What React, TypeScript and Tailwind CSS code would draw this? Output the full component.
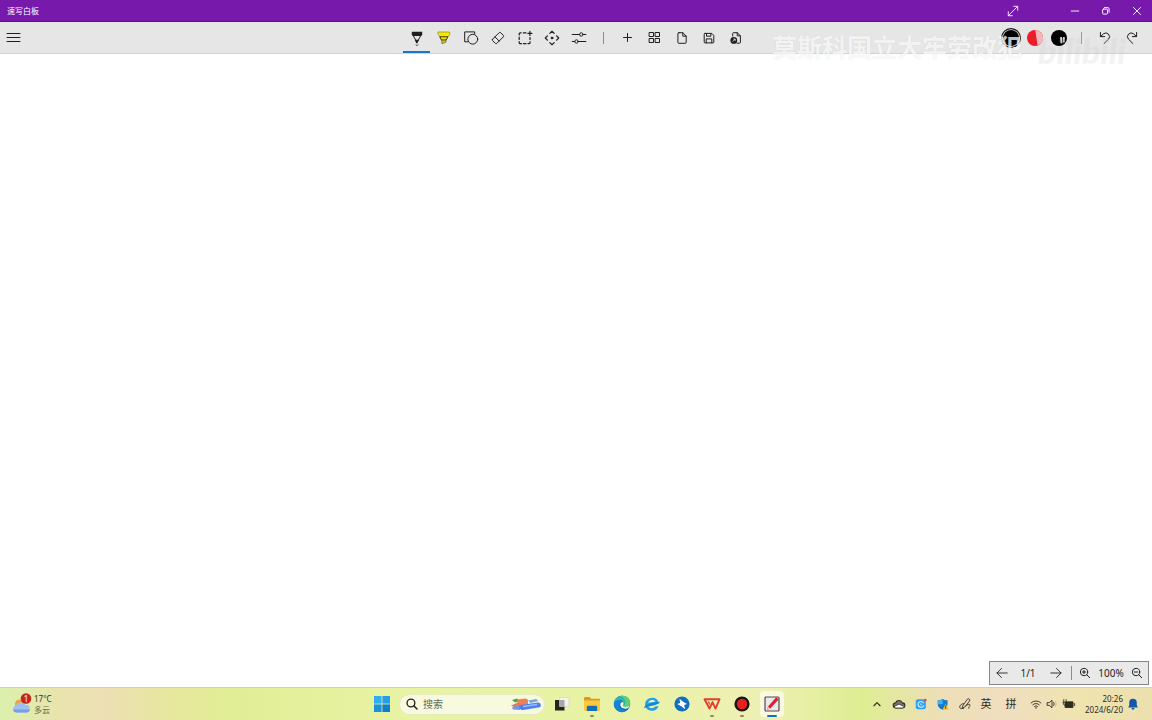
import React from "react";

interface IconProps {
  children: React.ReactNode;
  className?: string;
}

// 16px line icon, drawn in the current text colour
const Icon: React.FC<IconProps> = ({ children, className = "size-4" }) => (
  <svg
    viewBox="0 0 16 16"
    className={className}
    fill="none"
    stroke="currentColor"
    strokeWidth={1}
    strokeLinecap="round"
    strokeLinejoin="round"
    aria-hidden="true"
  >
    {children}
  </svg>
);

interface Tool {
  label: string;
  icon: React.ReactNode;
  active?: boolean;
}

const drawTools: Tool[] = [
  {
    label: "笔",
    active: true,
    icon: (
      <Icon>
        <path d="M2.8 1.8h10.4v2.4L12.3 6H3.7l-.9-1.800z" fill="currentColor" stroke="none" />
        <path d="M4.2 5.500 8 12.600l3.800-7.100" />
        <path d="M6.700 10.200h2.600L8 12.800z" fill="currentColor" />
        <path d="M7 14.800l1 .8 1-.8" strokeWidth=".8" />
      </Icon>
    ),
  },
  {
    label: "荧光笔",
    icon: (
      <Icon>
        <path d="M2.300 2h11.400v2.500L12 7H4L2.300 4.500z" fill="#f6e800" stroke="#8f8a1c" strokeWidth=".7" />
        <path d="M4.200 6.800h7.600L10.200 10H5.800z" fill="#f6e800" stroke="#3c3a12" />
        <path d="M6 10.200h4V12l-3.600 1.600z" fill="#d8cb00" stroke="#6b671a" strokeWidth=".8" />
      </Icon>
    ),
  },
  {
    label: "形状",
    icon: (
      <Icon>
        <path d="M4.600 11.800H1.700V1.900h10v2" />
        <circle cx="9.8" cy="9.2" r="4.9" />
      </Icon>
    ),
  },
  {
    label: "橡皮擦",
    icon: (
      <Icon>
        <path d="M2.6 9.200 9.200 2.600a1 1 0 0 1 1.400 0l2.800 2.800a1 1 0 0 1 0 1.400l-6.600 6.600a1 1 0 0 1-1.400 0l-2.800-2.800a1 1 0 0 1 0-1.400z" />
        <path d="M5 6.900 9.100 11" />
      </Icon>
    ),
  },
  {
    label: "选择",
    icon: (
      <Icon>
        <path
          d="M2.200 5V3.800a1 1 0 0 1 1-1h1M2.200 7v2.400M2.200 11.500v1.200a1 1 0 0 0 1 1h1.200M6.400 13.700H9M11 13.700h1a1 1 0 0 0 1-1v-1.200M13 9.400V7.600M6.400 2.800H9M12.900 1.400v4M10.900 3.400h4"
          strokeWidth="1.2"
        />
      </Icon>
    ),
  },
  {
    label: "移动",
    icon: (
      <Icon>
        <path
          d="M5.800 3.400 8 1.300l2.200 2.100M5.800 12.600 8 14.700l2.200-2.100M3.400 5.800 1.300 8l2.100 2.200M12.600 5.800 14.700 8l-2.100 2.200"
          strokeWidth="1.2"
        />
        <circle cx="8" cy="8" r=".9" fill="currentColor" />
      </Icon>
    ),
  },
  {
    label: "设置",
    icon: (
      <Icon>
        <path d="M1.300 4.500h7.200M12.200 4.500h2.600M1.300 11.500h2.300M7.300 11.500h7.500" strokeWidth="1.2" />
        <circle cx="10.300" cy="4.500" r="1.700" />
        <circle cx="5.500" cy="11.500" r="1.700" />
      </Icon>
    ),
  },
];

const pageTools: Tool[] = [
  {
    label: "新建",
    icon: (
      <Icon>
        <path d="M7.500 3.500v8M3.500 7.500h8" />
      </Icon>
    ),
  },
  {
    label: "所有页面",
    icon: (
      <Icon>
        <path d="M2.500 2.500h4v4h-4zM8.500 2.500h4v4h-4zM2.500 8.500h4v4h-4zM8.500 8.500h4v4h-4z" />
      </Icon>
    ),
  },
  {
    label: "打开",
    icon: (
      <Icon>
        <path d="M4.900 2.700h4l3.300 3.400v6.200a1 1 0 0 1-1 1H4.900a1 1 0 0 1-1-1V3.700a1 1 0 0 1 1-1zM8.800 2.800v3.400h3.400" />
      </Icon>
    ),
  },
  {
    label: "保存",
    icon: (
      <Icon>
        <path d="M4 3.400h6.800l2 2V12a.9.9 0 0 1-.9.9H4.100a.9.9 0 0 1-.9-.9V4.300a.9.9 0 0 1 .8-.9z" />
        <path d="M5.500 3.600v2.600h4.400V3.600M5.200 12.800V8.900h5.600v3.900" />
      </Icon>
    ),
  },
  {
    label: "导出",
    icon: (
      <Icon>
        <path d="M4.700 6V3.500a.8.8 0 0 1 .8-.8h3.900l3 3.200v6.300a1 1 0 0 1-1 1H9M9.200 2.800v3h3" />
        <circle cx="5.800" cy="10.400" r="3.400" fill="currentColor" stroke="none" />
        <path d="M4.700 11.500 7 9.200M5.600 9h1.600v1.600" stroke="#e6e6e6" strokeWidth=".8" />
      </Icon>
    ),
  },
];

const ToolButton: React.FC<Tool> = ({ label, icon, active }) => (
  <button
    type="button"
    aria-label={label}
    className={
      active
        ? "flex h-full w-[27px] items-center justify-center border-y-2 border-t-transparent border-b-[#1577d2]"
        : "flex h-full w-[27px] items-center justify-center"
    }
  >
    {icon}
  </button>
);

const TitleBar: React.FC = () => (
  <header className="flex h-[22px] items-stretch border-b border-[#5c1191] bg-[#7719aa] text-white">
    <h1 className="flex flex-1 items-center pl-[7px] text-[8px]">速写白板</h1>
    <button type="button" aria-label="全屏" className="mr-[31px] flex w-[31px] items-center justify-center">
      <Icon className="size-3.5">
        <path d="M2.800 13.200 13.200 2.800M8.800 2.600h4.600v4.600M2.600 8.800v4.600h4.600" />
      </Icon>
    </button>
    <button type="button" aria-label="最小化" className="flex w-[31px] items-center justify-center">
      <Icon className="size-3">
        <path d="M3 8h10" strokeWidth="1.2" />
      </Icon>
    </button>
    <button type="button" aria-label="还原" className="flex w-[31px] items-center justify-center">
      <Icon className="size-3">
        <rect x="3.500" y="5.500" width="6.600" height="6.600" rx="1" strokeWidth="1.3" />
        <path d="M5.800 3.500h4.700a1.600 1.600 0 0 1 1.600 1.600v4.700" strokeWidth="1.3" />
      </Icon>
    </button>
    <button type="button" aria-label="关闭" className="flex w-[31px] items-center justify-center">
      <Icon className="size-3">
        <path d="M3.300 3.300l9.400 9.400M12.700 3.300l-9.400 9.400" strokeWidth="1.3" />
      </Icon>
    </button>
  </header>
);

const Toolbar: React.FC = () => (
  <div className="relative grid h-8 grid-cols-[1fr_auto_1fr] items-stretch border-b border-[#d2d2d2] bg-[#e6e6e6] text-[#1f1f1f]">
    <div className="flex pl-1.5">
      <button type="button" aria-label="菜单" className="flex items-center">
        <Icon>
          <path d="M1 3.500h13M1 7.500h13M1 11.500h13" />
        </Icon>
      </button>
    </div>
    <div className="flex items-stretch">
      {drawTools.map((tool) => (
        <ToolButton key={tool.label} {...tool} />
      ))}
      <div className="flex w-[22px] items-center justify-center">
        <span className="h-3 w-px bg-[#8c8c8c]" />
      </div>
      {pageTools.map((tool) => (
        <ToolButton key={tool.label} {...tool} />
      ))}
    </div>
    <div className="flex items-center justify-end pr-[7px]">
      <button type="button" aria-label="黑色画笔" className="flex w-6 justify-center">
        <svg viewBox="0 0 20 20" className="size-5 shrink-0" aria-hidden="true">
          <circle cx="10" cy="10" r="9.4" fill="#fff" stroke="#111" strokeWidth="1.2" />
          <circle cx="10" cy="10" r="8.1" fill="#000" />
        </svg>
      </button>
      <button type="button" aria-label="红色画笔" className="flex w-6 justify-center">
        <svg viewBox="0 0 16 16" className="size-4" aria-hidden="true">
          <circle cx="8" cy="8" r="8" fill="#ec1c28" />
          <path d="M8.300 0A8 8 0 0 1 10.500 15.600z" fill="#f4b7bb" />
        </svg>
      </button>
      <button type="button" aria-label="黑色细笔" className="flex w-6 justify-center">
        <svg viewBox="0 0 16 16" className="size-4" aria-hidden="true">
          <circle cx="8" cy="8" r="8" fill="#000" />
          <path d="M9 7.200l2-.3.3 6-1.600.3zM12 7h1.800l-.3 5.400h-1.300z" fill="#d8d8d8" />
        </svg>
      </button>
      <div className="flex w-5 justify-center">
        <span className="h-3 w-px bg-[#9a9a9a]" />
      </div>
      <button type="button" aria-label="撤消" className="flex w-[27px] justify-center">
        <Icon>
          <path d="M3.400 2.500v4.100h4.200M3.600 6.400l2.900-2.600a3.700 3.700 0 0 1 5.200 5.200l-4.600 4.500" />
        </Icon>
      </button>
      <button type="button" aria-label="恢复" className="flex w-[27px] justify-center">
        <Icon>
          <path d="M12.600 2.500v4.100H8.400M12.400 6.400 9.500 3.800a3.700 3.700 0 0 0-5.200 5.200l4.600 4.500" />
        </Icon>
      </button>
    </div>

    {/* stream overlay */}
    <div className="pointer-events-none absolute top-[9px] right-6 flex items-start gap-4 whitespace-nowrap">
      <span className="text-[25px] leading-8 font-bold text-white/75 [text-shadow:0_0_1px_rgba(0,0,0,0.1)]">
        莫斯科国立大牢劳改犯
      </span>
      <span className="w-[90px] font-['Lato'] text-[34px] leading-10 font-black text-white/20 italic [text-shadow:0_0_1px_rgba(0,0,0,0.06)]">
        bilibili
      </span>
    </div>
  </div>
);

const PageControls: React.FC = () => (
  <div className="flex h-6 items-center border border-[#858585] bg-[#e9e9e9] text-[10px] text-[#1c1c1c]">
    <button type="button" aria-label="上一页" className="flex w-[23px] justify-center">
      <Icon className="size-3.5">
        <path d="M14 8H2.200M7.400 2.800 2.200 8l5.200 5.200" />
      </Icon>
    </button>
    <span className="w-[30px] text-center">1/1</span>
    <button type="button" aria-label="下一页" className="flex w-[26px] justify-center">
      <Icon className="size-3.5">
        <path d="M2 8h11.800M8.600 2.800 13.800 8l-5.200 5.200" />
      </Icon>
    </button>
    <div className="flex w-1 justify-center">
      <span className="h-3.5 w-px bg-[#8c8c8c]" />
    </div>
    <button type="button" aria-label="放大" className="flex w-6 justify-center">
      <Icon className="size-3">
        <circle cx="6.7" cy="6.7" r="4.9" strokeWidth="1.3" />
        <path d="M10.300 10.300l4 4M4.600 6.700h4.200M6.700 4.600v4.200" strokeWidth="1.3" />
      </Icon>
    </button>
    <span className="flex w-7 justify-center">100%</span>
    <button type="button" aria-label="缩小" className="flex w-[23px] justify-center">
      <Icon className="size-3">
        <circle cx="6.7" cy="6.7" r="4.9" strokeWidth="1.3" />
        <path d="M10.300 10.300l4 4M4.600 6.700h4.200" strokeWidth="1.3" />
      </Icon>
    </button>
  </div>
);

interface TaskApp {
  label: string;
  art: React.ReactNode;
  state?: "running" | "focused";
}

const taskApps: TaskApp[] = [
  {
    label: "任务视图",
    art: (
      <>
        <path d="M2 5h9.500v10.500H2z" fill="#26241f" />
        <path d="M6.500 2.500H16v9H6.500z" fill="#f4f4ee" stroke="#c9c9b8" strokeWidth=".5" />
        <path d="M6.500 5h5v6.500h-5z" fill="#a8a8a8" />
      </>
    ),
  },
  {
    label: "文件资源管理器",
    state: "running",
    art: (
      <>
        <path d="M1 3a1 1 0 0 1 1-1h4.500l1.800 1.800H16a1 1 0 0 1 1 1V9H1z" fill="#d99a1d" />
        <path d="M1 5.400h16V15a1 1 0 0 1-1 1H2a1 1 0 0 1-1-1z" fill="#fdc843" />
        <path d="M3.800 16v-4a1.300 1.300 0 0 1 1.300-1.300h7.800a1.300 1.300 0 0 1 1.300 1.300v4z" fill="#156fb7" />
      </>
    ),
  },
  {
    label: "Edge",
    art: (
      <>
        <circle cx="9" cy="9" r="8.2" fill="#1268b8" />
        <path d="M.8 8.500C1.300 4 4.800.8 9.200.8c4.700 0 8 3.300 8 6.900 0 2.600-2 4.300-4.500 4.300-1.800 0-2.800-.8-2.800-1.400 0-.5.700-.9.700-2.100 0-2-1.800-3.400-4-3.400-2.600 0-4.600 1.300-5.800 3.400z" fill="#2fb5b0" />
        <path d="M9.200.8c4.700 0 8 3.300 8 6.900 0 2.600-2 4.300-4.500 4.300-1.500 0-2.500-.6-2.700-1.100 4-.5 3.500-8.300-3-9.800.7-.2 1.400-.3 2.200-.3z" fill="#5fd06c" />
        <path d="M10.600 8.500c0 1.200-.7 1.600-.7 2.100 0 .6 1 1.400 2.800 1.400 1.600 0 2.900-.6 3.700-1.700.5 1.700-1.600 3.500-4.200 3.500-3 0-5-2-4.900-4.200.1-1.700 1.300-2.500 2.300-2.500.7 0 1 .7 1 1.400z" fill="#edf6d6" />
        <path d="M.8 8.800C1.600 6.600 3.500 5.200 6 5.100c1.800 0 3.500.9 4.200 2.100-2.600-.6-4 1.400-3.600 3.600.5 3 3.400 5 7.700 4.300A8.200 8.200 0 0 1 .8 8.800z" fill="#1683d4" />
      </>
    ),
  },
  {
    label: "浏览器",
    art: (
      <>
        <path d="M2 9.300a7 7 0 0 1 13.700-1.400L4.600 9.800c1 3.800 5.300 4.500 8 1.500h2.900a7 7 0 0 1-13.500-2z" fill="#1da0e6" />
        <path d="M5 7.700a4.200 4.200 0 0 1 7.500-.9z" fill="#eaf5cf" />
        <path d="M.8 13.200c.7-3.300 6-5.400 15.900-6.500-.2 2.600-5.400 3.600-9.100 4.400-3 .7-4.800 1.400-6.800 2.100z" fill="#1484d8" />
      </>
    ),
  },
  {
    label: "迅雷",
    art: (
      <>
        <circle cx="9" cy="9" r="7.6" fill="#116fc2" />
        <path d="M6.500 3.800l3.600 3 4 2.200-3 1 1.100 4.200-3.900-3L4.200 9l2.900-1z" fill="#fff" />
      </>
    ),
  },
  {
    label: "WPS Office",
    state: "running",
    art: (
      <>
        <path d="M1.500 4.300h15l-4 9.300-3-6.500-3 6.500z" fill="none" stroke="#e43d2c" strokeWidth="1.9" strokeLinejoin="round" />
        <path d="M5.500 6.500l1.200 3" fill="none" stroke="#e43d2c" strokeWidth="1.3" />
      </>
    ),
  },
  {
    label: "录屏",
    state: "running",
    art: (
      <>
        <circle cx="9" cy="9" r="7.6" fill="#191414" />
        <circle cx="9" cy="9" r="5.2" fill="#e8201c" />
      </>
    ),
  },
  {
    label: "速写白板",
    state: "focused",
    art: (
      <>
        <rect x="2" y="2" width="14" height="14" rx="1" fill="#e8e8ee" stroke="#4a4a50" strokeWidth="1.2" />
        <path d="M5 11.500 13.300 2.300l2.300 2.100-8.300 9.200-3.300 1.200z" fill="#e01e2b" />
        <path d="M5 11.500l2.300 2.100L4 14.800z" fill="#f2c9a0" />
      </>
    ),
  },
];

const TaskButton: React.FC<TaskApp> = ({ label, art, state }) => (
  <button type="button" aria-label={label} className="flex h-full w-[30px] items-center justify-center">
    <span
      className={
        state === "focused"
          ? "flex h-[26px] w-6 flex-col items-center justify-end rounded-sm bg-[#fbf9df]"
          : "flex h-[26px] w-6 flex-col items-center justify-end"
      }
    >
      <svg viewBox="0 0 18 18" className="size-[18px]" aria-hidden="true">
        {art}
      </svg>
      <span className="flex h-1 items-end">
        {state === "focused" && <span className="h-0.5 w-2.5 rounded-full bg-[#1270c4]" />}
        {state === "running" && <span className="h-0.5 w-1 rounded-full bg-[#8a8c5c]" />}
      </span>
    </span>
  </button>
);

const Weather: React.FC = () => (
  <button type="button" className="flex items-center gap-0.5 pl-3 text-left text-[8px] leading-[11px] text-[#34361f]">
    <svg viewBox="0 0 20 22" className="h-[22px] w-5" aria-hidden="true">
      <circle cx="7.500" cy="11" r="4.500" fill="#f2a12b" />
      <path d="M4.500 19.500a3.600 3.600 0 0 1-.4-7.100 5.200 5.200 0 0 1 9.500-.3 3.700 3.700 0 0 1 .9 7.400z" fill="#9cc0f2" />
      <path d="M1 16.500a3.600 3.600 0 0 0 3.500 3h10a3.600 3.600 0 0 0 3.400-3z" fill="#769fe4" />
      <circle cx="14" cy="5.500" r="5.300" fill="#c4261d" />
      <text x="14" y="8.500" textAnchor="middle" fontSize="8" fill="#fff">
        1
      </text>
    </svg>
    <span className="flex flex-col">
      <span>17°C</span>
      <span className="text-[#6f7150]">多云</span>
    </span>
  </button>
);

const SearchBox: React.FC = () => (
  <label className="mx-0.5 flex h-[21px] w-[146px] items-center rounded-full border border-[#e6ebbf] bg-[#f7fadf] pr-0.5 pl-1.5">
    <Icon className="size-3 shrink-0 text-[#222]">
      <circle cx="6.600" cy="6.600" r="5.200" strokeWidth="1.8" />
      <path d="M10.500 10.500l4.200 4.200" strokeWidth="1.9" />
    </Icon>
    <input
      type="text"
      aria-label="搜索"
      placeholder="搜索"
      className="ml-[5px] min-w-0 flex-1 bg-transparent text-[10px] outline-none placeholder:text-[#666a55]"
    />
    <svg viewBox="0 0 32 16" className="h-4 w-8 shrink-0" aria-hidden="true">
      <path d="M2 4l5-1.500 3 2.500-5 1.500z" fill="#56a53d" />
      <path d="M7.500 3.500 15 2.500a2.500 2.500 0 0 1 3 2.500v4H7.500z" fill="#ee8150" />
      <path d="M1 9.500l7-3 4 4-6 1.500z" fill="#e9765a" />
      <path d="M2 12c2-2.500 5-3 8-2v4l-7-.5z" fill="#7d93e8" />
      <path d="M18 4.500l8-1.500 2.500 2-8 2z" fill="#72a8e3" />
      <path d="M10 9l18-2.500a2.700 2.700 0 0 1 2 4.700L13 14c-3 .5-5-3.500-3-5z" fill="#4c80ee" />
      <path d="M13 10.500l14-2" stroke="#9bbcff" strokeWidth="1.3" />
    </svg>
  </label>
);

const trayIcons: TaskApp[] = [
  {
    label: "显示隐藏的图标",
    art: <path d="M4.500 10 8 6.500l3.500 3.500" strokeWidth="1.3" />,
  },
  {
    label: "OneDrive",
    art: (
      <>
        <path d="M4.600 12.500a3 3 0 0 1-.4-6 4.200 4.200 0 0 1 7.700.2 2.900 2.900 0 0 1-.2 5.800z" fill="#77756c" strokeWidth="1.2" />
        <path d="M2.500 10.800 8 8.200l5.600 2.400c0 1-.9 1.900-1.900 1.900H4.600c-1 0-1.900-.7-2.100-1.700z" fill="#fff" strokeWidth=".8" />
      </>
    ),
  },
  {
    label: "电脑管家",
    art: (
      <>
        <rect x="2" y="2.500" width="11.500" height="11.500" rx="2.4" fill="#2d9ff1" stroke="none" />
        <path d="M10.600 6.500a3.300 3.300 0 1 0 .3 3.400" stroke="#d5efff" strokeWidth="1.3" />
        <circle cx="8" cy="8.500" r="1.300" fill="#80cdfb" stroke="none" />
        <circle cx="13" cy="3.500" r="1.400" fill="#e9443a" stroke="none" />
      </>
    ),
  },
  {
    label: "Windows 安全中心",
    art: (
      <>
        <path d="M2 3.800c2.300 0 4.100-.7 5.600-1.800 1.500 1.100 3.200 1.800 5.600 1.800v4.400c0 3.200-2.700 5.300-5.600 6.300C4.700 13.500 2 11.400 2 8.200z" fill="#1579cd" stroke="none" />
        <path d="M7.600 2v6.200H2V3.800c2.300 0 4.100-.7 5.600-1.800z" fill="#40b2ef" stroke="none" />
        <path d="M11 8l3.500 6.200h-7z" fill="#f5ba23" stroke="none" />
        <path d="M11 10.200V12M11 13.200v.1" stroke="#3c3212" strokeWidth=".9" />
      </>
    ),
  },
  {
    label: "笔菜单",
    art: (
      <>
        <path d="M5.500 10 10.500 2.700a1.600 1.600 0 0 1 2.700 1.800L8 11.300l-3 1.500z" />
        <path d="M6 7.500C3.500 8 1.500 10 2 12c.5 1.800 3 1.500 4.500.8M9 10c1.500-1.500 4.200-2.300 4.700-1.200.5 1.500-2.200 2.700-1.500 4.200" />
      </>
    ),
  },
];

const Tray: React.FC = () => (
  <div className="flex items-center justify-end pr-3 text-[#2e2b20]">
    {trayIcons.map(({ label, art }) => (
      <button key={label} type="button" aria-label={label} className="flex w-[22px] justify-center">
        <Icon className="size-3.5">{art}</Icon>
      </button>
    ))}
    <button type="button" className="w-5 text-center text-[11px]">
      英
    </button>
    <button type="button" className="w-[30px] text-center text-[11px]">
      拼
    </button>
    <button type="button" aria-label="网络、音量和电池" className="flex items-center gap-1 px-1">
      <Icon className="size-3">
        <path d="M1.500 6.500a9.200 9.200 0 0 1 13 0M3.700 9a6.100 6.100 0 0 1 8.600 0M5.900 11.300a3 3 0 0 1 4.200 0" strokeWidth="1.2" />
        <circle cx="8" cy="13.200" r="1" fill="currentColor" stroke="none" />
      </Icon>
      <Icon className="size-3">
        <path d="M2 6.200h2.500L8 3v10L4.500 9.800H2zM10.300 6a3 3 0 0 1 0 4" strokeWidth="1.2" />
        <path d="M12.300 4.500a5 5 0 0 1 0 7" stroke="#b7b094" />
      </Icon>
      <Icon className="size-3.5">
        <path d="M3.500 6.300V12h9V5.500H7z" fill="currentColor" />
        <path d="M13.700 7.500h.7v2.300h-.7M2 3v3M4.800 3v3M1.500 6h3.800v1.500a1.900 1.900 0 0 1-3.800 0z" />
      </Icon>
    </button>
    <button type="button" className="flex items-center gap-[3px] text-right text-[8px] leading-[11px]">
      <span className="flex w-[43px] flex-col items-end whitespace-nowrap">
        <span>20:26</span>
        <span>2024/6/20</span>
      </span>
      <svg viewBox="0 0 16 16" className="size-3.5" aria-hidden="true">
        <path
          d="M8 2a4.300 4.300 0 0 1 4.300 4.300v3.200l1.200 2.500h-11l1.200-2.500V6.300A4.300 4.300 0 0 1 8 2zM6.200 12.700h3.600a1.800 1.800 0 0 1-3.600 0z"
          fill="#1557a8"
        />
      </svg>
    </button>
  </div>
);

const Taskbar: React.FC = () => (
  <footer className="grid h-[33px] grid-cols-[1fr_auto_1fr] items-stretch border-t border-[#cfd0bd] bg-[linear-gradient(90deg,#dcf0ac_0%,#e8e4ac_5%,#ecdfb4_9%,#e6e79c_15%,#e2ee96_20%,#e8f3a4_35%,#e9f2a6_55%,#eef0b4_66%,#deed92_75%,#ecdfb4_81%,#f0dec0_87%,#efe4ae_94%,#ecdfae_100%)]">
    <Weather />
    <div className="flex items-center pl-0.5">
      <button type="button" aria-label="开始" className="flex w-[30px] justify-center">
        <svg viewBox="0 0 16 16" className="size-4" aria-hidden="true">
          <path d="M0 0h7.600v7.600H0z" fill="#2eaef0" />
          <path d="M8.400 0H16v7.600H8.400z" fill="#229fe6" />
          <path d="M0 8.400h7.600V16H0z" fill="#1a93de" />
          <path d="M8.400 8.400H16V16H8.400z" fill="#0f7fd0" />
        </svg>
      </button>
      <SearchBox />
      {taskApps.map((app) => (
        <TaskButton key={app.label} {...app} />
      ))}
    </div>
    <Tray />
  </footer>
);

const App: React.FC = () => {
  return (
    <div className="flex min-h-screen flex-col bg-white font-['Noto_Sans','Noto_Sans_CJK_SC',sans-serif]">
      <TitleBar />
      <Toolbar />
      <main className="flex flex-1 items-end justify-end px-[3px] pb-0.5">
        <PageControls />
      </main>
      <Taskbar />
    </div>
  );
};

export default App;
